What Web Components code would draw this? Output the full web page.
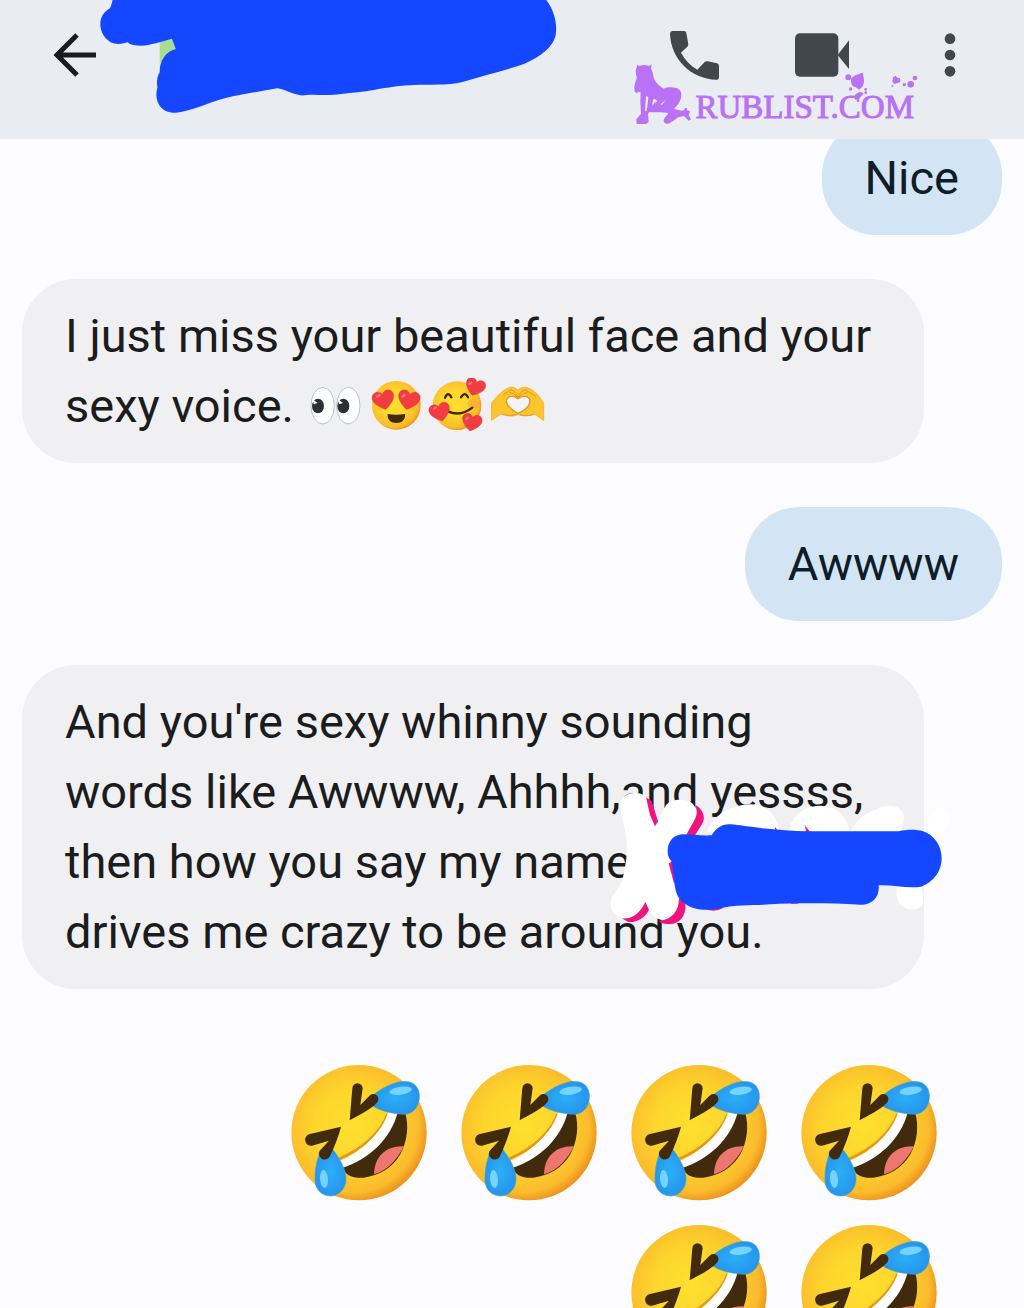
<!DOCTYPE html>
<html lang="en">
<head>
<meta charset="utf-8">
<meta name="viewport" content="width=device-width, initial-scale=1">
<title>Messages</title>
<style>
  html, body { margin: 0; height: 100%; }
  body { font-family: Roboto, "Liberation Sans", sans-serif; background: #fcfcff; color: #1a1c1e; overflow: hidden; }
</style>
</head>
<body>
<chat-screen>
  <chat-header slot="header"></chat-header>
  <chat-message type="sent">Nice</chat-message>
  <chat-message type="received">I just miss your beautiful face and your<br>sexy voice. <emoji-icon name="eyes"></emoji-icon><emoji-icon name="heart-eyes"></emoji-icon><emoji-icon name="hearts"></emoji-icon><emoji-icon name="heart-hands"></emoji-icon></chat-message>
  <chat-message type="sent">Awwww</chat-message>
  <chat-message type="received">And you're sexy whinny sounding<br>words like Awwww, Ahhhh,and yessss,<br>then how you say my name<br>drives me crazy to be around you.<name-cover slot="cover"></name-cover></chat-message>
  <emoji-message>
    <emoji-icon name="rofl"></emoji-icon>
    <emoji-icon name="rofl"></emoji-icon>
    <emoji-icon name="rofl"></emoji-icon>
    <emoji-icon name="rofl"></emoji-icon>
    <emoji-icon name="rofl"></emoji-icon>
    <emoji-icon name="rofl"></emoji-icon>
  </emoji-message>
</chat-screen>

<script>
// small helper: every component just clones its template
const define = (name, html, init) => {
    const template = document.createElement("template");
    template.innerHTML = html;

    customElements.define(name, class extends HTMLElement {
        constructor() {
            super();
            this.attachShadow({ mode: "open" });
            this.shadowRoot.appendChild(template.content.cloneNode(true));
        }

        connectedCallback() {
            if (init) init(this);
        }
    });
};

define("chat-screen", /*html*/`
  <style>
  :host { display: flex; flex-direction: column; height: 100vh; overflow: hidden; }
  .header { position: relative; z-index: 1; flex: none; }
  /* the list is scrolled a little under the header */
  main { display: flex; flex-direction: column; gap: 44px; padding: 0 22px; margin-top: -18px; }
  </style>
  <div class="header"><slot name="header"></slot></div>
  <main><slot></slot></main>
`);

define("chat-header", /*html*/`
  <style>
  :host { display: block; background: #e9edf1; }
  header { display: flex; align-items: center; height: 110px; padding: 0 49px 29px 53px; }
  button { display: flex; justify-content: center; border: 0; padding: 0; background: none; color: #42474e; cursor: pointer; }
  svg { display: block; }
  .back { color: #1a1c1e; }
  .name { align-self: flex-start; margin-left: 3px; }
  .actions { display: flex; align-items: center; gap: 76px; margin-left: auto; }
  .more { width: 50px; }
  site-logo { position: absolute; right: 108px; top: 62px; }
  </style>
  <header>
    <button class="back" aria-label="Back">
      <svg width="44" height="44" viewBox="0 0 44 44" fill="none" stroke="currentColor" stroke-width="5"><path d="M43 22H5M24 2L4 22L24 42"/></svg>
    </button>
    <svg class="name" width="457" height="114" viewBox="261 0 1194 342" preserveAspectRatio="none" role="img" aria-label="Hidden contact">
      <path fill="#a5de94" d="M417 110H450L462 150L417 190Z"/>
      <path fill="#1447ff" d="M294 0C291 12 290 19 287 25C268 38 261 55 262 77C264 105 282 131 308 132C320 132 328 129 333 127C340 135 352 137 368 137C392 136 423 124 449 116L459 147C432 154 416 185 417 216C409 232 409 248 411 262C406 282 408 300 415 314C426 333 442 339 460 338C502 334 544 307 587 295C637 280 682 275 724 265C744 268 763 282 784 286C797 287 803 284 816 284C856 287 881 284 913 279C973 274 1018 257 1080 255C1120 253 1168 257 1208 246C1258 228 1320 212 1370 191C1415 169 1444 140 1451 108C1457 71 1448 32 1427 0Z"/>
    </svg>
    <div class="actions">
      <button aria-label="Call">
        <svg width="49" height="49" viewBox="149 61 147 147"><path fill="currentColor" d="M156 61H191Q197 61 198 67L204 101Q204 105 201 108L182 126C194 148 210 165 231 177L253 154Q257 151 262 152L290 158Q296 160 296 166V201Q295 208 288 207C211 205 151 143 149 69Q149 62 156 61Z"/></svg>
      </button>
      <button aria-label="Video call">
        <svg width="54" height="44" viewBox="525 68 162 132"><g fill="currentColor"><rect x="525" y="69" width="130" height="130" rx="15"/><path d="M653 134L687 90V176Z"/></g></svg>
      </button>
      <button class="more" aria-label="More options">
        <svg width="12" height="44" viewBox="972 68 36 132"><g fill="currentColor"><circle cx="990" cy="85" r="16"/><circle cx="990" cy="134" r="16"/><circle cx="990" cy="183" r="16"/></g></svg>
      </button>
    </div>
  </header>
  <site-logo></site-logo>
`);

define("site-logo", /*html*/`
  <style>
  :host { display: block; color: #b971f5; }
  .logo { position: relative; padding: 26px 2px 0 62px; }
  span { display: block; font: 33px/38px "Liberation Serif", serif; -webkit-text-stroke: 1px; }
  svg { position: absolute; left: 0; top: 0; }
  </style>
  <div class="logo">
    <span>RUBLIST.COM</span>
    <svg width="284" height="64" viewBox="36 156 852 192" fill="currentColor" aria-hidden="true">
      <g transform="translate(28 150)">
        <path d="M18 14L24 18Q38 12 53 18L61 13L59 26C65 34 65 46 68 56C74 70 86 78 97 86C110 80 134 80 144 89C152 97 151 109 147 120C143 131 136 138 128 146L150 152L159 151L160 144L168 145L166 150L176 154L172 165L179 178L172 182L158 168L141 172C132 178 125 184 116 189C107 193 98 191 97 182C97 175 106 168 111 159L90 157L53 157L50 163L52 186L44 192H16L15 178L29 161L27 125L28 97L19 95V100L10 96L9 82C9 73 14 64 16 55C15 43 11 36 14 28Z"/>
        <path fill="#e9edf1" d="M44 108L51 112L48 140L45 153H41ZM78 124Q70 113 65 119Q63 130 63 138Q68 127 78 124ZM104 119L88 133L92 135Z"/>
      </g>
      <circle cx="679" cy="202" r="9"/>
      <path d="M687 207Q697 194 711 193Q716 187 723 189L726 211Q727 230 711 239Q704 231 692 228Q685 219 687 207Z"/>
      <circle cx="686" cy="237" r="5"/><circle cx="731" cy="238" r="4"/><circle cx="731" cy="248" r="4"/>
      <path d="M700 270Q693 254 706 250Q716 241 725 251Q715 260 713 265Q708 266 700 270Z"/>
      <path d="M813 202L821 197L826 203L834 205L835 216L825 220L817 222L811 215Z"/>
      <circle cx="811" cy="228" r="3"/><circle cx="847" cy="224" r="5"/><circle cx="866" cy="223" r="10"/><circle cx="879" cy="204" r="7"/>
    </svg>
  </div>
`);

define("chat-message", /*html*/`
  <style>
  :host { display: flex; }
  :host([type="sent"]) { justify-content: flex-end; }
  .bubble { position: relative; box-sizing: border-box; padding: 22px 43px; border-radius: 54px; font-size: 47px; line-height: 70px; white-space: nowrap; }
  :host([type="sent"]) .bubble { background: #d3e5f4; color: #0f1d28; }
  :host([type="received"]) .bubble { width: 92%; background: #f0f0f2; }
  </style>
  <div class="bubble"><slot></slot><slot name="cover"></slot></div>
`);

define("emoji-message", /*html*/`
  <style>
  :host { display: flex; justify-content: flex-end; padding: 31px 65px 0 0; --emoji-width: 136px; --emoji-height: 137px; --emoji-align: top; }
  .row { display: flex; flex-wrap: wrap; justify-content: flex-end; gap: 23px 34px; max-width: 646px; }
  </style>
  <div class="row"><slot></slot></div>
`);

// drawn over the name in the bubble
define("name-cover", /*html*/`
  <style>
  :host { position: absolute; left: 588px; top: 125px; }
  svg { display: block; }
  </style>
  <svg width="340" height="140" viewBox="60 60 1020 420" role="img" aria-label="Hidden name">
    <g fill="#fff">
      <path d="M92 105C90 78 116 67 140 69C158 69 170 80 174 98L195 165L225 112C234 91 260 87 287 91C313 95 324 119 315 145L294 193L250 210L238 285L252 340L268 390C267 426 250 446 215 449C190 445 177 430 168 396C155 425 134 444 109 444C75 444 60 421 62 395C65 370 91 356 99 322C104 294 111 268 111 230C110 182 92 143 92 105Z"/>
      <path d="M165 390L200 340L255 400L215 449Q180 440 165 390Z"/>
      <path d="M360 165C386 127 427 105 482 103C530 105 562 134 568 185H350Z"/>
      <path d="M596 185C604 135 643 107 693 107C741 109 770 135 778 185Z"/>
      <path d="M783 184C801 140 858 108 904 108C933 110 947 130 940 155L932 185Z"/>
      <path d="M920 350H995L1000 400C988 425 950 424 929 402C920 392 918 370 920 350Z"/>
      <path d="M1000 185L1026 129C1040 106 1076 111 1079 139C1079 165 1064 175 1052 190Z"/>
    </g>
    <g fill="#f0137f">
      <path d="M168 82L185 94L204 154L195 169L180 135Z"/>
      <path d="M315 104C340 117 349 145 335 164L312 200L288 196L308 160C318 142 326 130 315 104Z"/>
      <path d="M95 445C125 449 150 430 166 396L177 419C166 443 140 458 115 456Z"/>
      <path d="M205 452C242 452 267 425 267 384L286 402C289 440 267 462 239 462C225 462 213 460 205 452Z"/>
      <path d="M236 280L249 274L265 330L252 340Z"/>
      <path d="M555 171L568 187H555ZM645 166L661 187H648ZM340 414H400Q370 430 340 414ZM598 398H630Q612 405 598 398Z"/>
    </g>
    <path fill="#1447ff" d="M233 242C233 213 253 193 280 193C306 193 335 198 365 196C376 176 396 161 422 163C451 165 490 173 552 178C594 183 641 184 690 184L926 184C949 178 981 178 999 184C1031 194 1054 225 1055 263C1056 302 1030 337 993 350C954 357 910 344 866 346C869 382 847 405 811 404C717 399 617 399 542 403C491 407 438 403 396 414C350 424 310 420 286 402C258 386 254 356 252 322C246 301 251 287 242 270C235 263 233 253 233 242Z"/>
  </svg>
`);

const heart = (x, y, s, r) => `<path transform="translate(${x} ${y}) rotate(${r}) scale(${s})" fill="#f23c43" stroke="#c9352f" stroke-width="1" d="M0 27C-19 15-33 1-31-13C-29-29-8-32 0-17C8-32 29-29 31-13C33 1 19 15 0 27Z"/><ellipse cx="${x - 15 * s}" cy="${y - 13 * s}" rx="${7 * s}" ry="${4 * s}" transform="rotate(-35 ${x - 15 * s} ${y - 13 * s})" fill="#ff7774"/>`;

const faceGradient = `<radialGradient id="face" cx=".45" cy=".45" r=".56"><stop offset="0" stop-color="#fee02f"/><stop offset=".5" stop-color="#fdd52c"/><stop offset=".88" stop-color="#fabb2c"/><stop offset="1" stop-color="#ee951f"/></radialGradient>`;

const emojis = {
    "eyes": {
        label: "👀",
        box: "30 24 180 162",
        art: `<g fill="#fff" stroke="#b5c4ce" stroke-width="3"><ellipse cx="80" cy="107" rx="35" ry="55"/><ellipse cx="157" cy="107" rx="35" ry="55"/></g>
          <g fill="#2b3034"><ellipse cx="66" cy="108" rx="18" ry="22"/><ellipse cx="142" cy="108" rx="18" ry="22"/></g>
          <g fill="#fff"><path d="M50 88L65 99L53 103Z"/><path d="M126 88L141 99L129 103Z"/></g>`
    },
    "heart-eyes": {
        label: "😍",
        box: "210 24 180 162",
        art: `<circle cx="301" cy="106" r="73" fill="url(#face)"/>
          <path d="M275 132Q301 137 327 132C329 149 318 159 301 159S273 149 275 132Z" fill="#422b0d"/>` +
          heart(263, 91, 1.05, -13) + heart(338, 91, 1.05, 13)
    },
    "hearts": {
        label: "🥰",
        box: "390 24 180 162",
        art: `<circle cx="483" cy="107" r="73" fill="url(#face)"/>
          <ellipse cx="532" cy="101" rx="17" ry="14" fill="#f69b42" opacity=".5"/>
          <g fill="none" stroke="#422b0d" stroke-width="7" stroke-linecap="round"><path d="M447 83Q456 63 466 82M495 82Q507 63 516 82"/><path d="M456 124Q493 141 529 113"/></g>` +
          heart(537, 52, 0.95, 20) + heart(432, 127, 1, -15) + heart(527, 158, 0.95, 12)
    },
    "heart-hands": {
        label: "🫶",
        box: "570 24 180 162",
        art: `<path fill="#fbc52d" stroke="#e9a422" stroke-width="2" d="M586 151L587 99C602 79 619 61 638 53C650 48 659 54 666 61C674 50 690 49 703 57C721 67 736 84 743 101V152L716 132C700 139 681 140 666 133C652 142 632 138 616 132Z"/>
          <path fill="#f4f3f5" stroke="#e29622" stroke-width="4" d="M666 131C645 118 630 106 631 92C634 77 652 75 666 86C680 75 700 77 702 93C702 108 685 122 666 131Z"/>
          <path fill="none" stroke="#e49d22" stroke-width="3" d="M621 76L645 58Q657 61 666 82Q676 60 689 60L719 79M641 67Q654 68 666 84Q679 69 694 68M616 132Q640 141 660 134M671 134Q698 140 716 132"/>`
    },
    "rofl": {
        label: "🤣",
        box: "35 26 408 411",
        art: `<circle cx="239" cy="232" r="203" fill="url(#face)"/>
          <path d="M325 176C306 229 249 283 180 310" fill="none" stroke="#e89618" stroke-width="8"/>
          <path d="M350 170H377C390 213 383 259 363 297C338 339 299 361 253 367C222 369 199 362 188 334L280 285Z" fill="#422b0d"/>
          <path d="M284 357C285 304 320 270 374 273C354 311 327 345 284 357Z" fill="#ed7770"/>
          <path d="M327 170C308 232 249 286 182 317L191 337C268 313 335 251 355 171Z" fill="#fff"/>
          <path d="M275 124C314 91 361 72 390 80C414 86 424 109 419 136C414 161 397 176 375 177C338 175 303 168 276 149Z" fill="url(#tear)" stroke="#41a7b8" stroke-width="2"/>
          <ellipse cx="364" cy="106" rx="34" ry="12" transform="rotate(-8 364 106)" fill="#75d3ff"/>
          <path d="M155 276C180 306 201 343 200 373C198 402 179 421 153 422C126 421 107 401 107 374C106 344 112 317 122 290Z" fill="url(#tear)" stroke="#41a7b8" stroke-width="2"/>
          <ellipse cx="134" cy="371" rx="12" ry="27" transform="rotate(-5 134 371)" fill="#75d3ff"/>
          <g fill="#422b0d">
            <path d="M219 99A15 15 0 0 1 250 99L243 149L272 120A15 15 0 0 1 292 143C270 166 235 181 211 195Z"/>
            <path d="M185 214L92 236A17 17 0 0 0 98 271L149 256L121 286A15 15 0 0 0 151 304C165 276 178 241 185 214Z"/>
          </g>`
    }
};

define("emoji-icon", /*html*/`
  <style>
  :host { display: inline-block; vertical-align: var(--emoji-align, -10px); line-height: 0; }
  svg { display: block; width: var(--emoji-width, 60px); height: var(--emoji-height, 54px); }
  </style>
  <svg role="img"></svg>
`, (el) => {
    const emoji = emojis[el.getAttribute("name")];
    const svg = el.shadowRoot.querySelector("svg");
    svg.setAttribute("viewBox", emoji.box);
    svg.setAttribute("aria-label", emoji.label);
    svg.innerHTML = `<defs>${faceGradient}<radialGradient id="tear"><stop offset="0" stop-color="#2bb0f5"/><stop offset="1" stop-color="#2795ed"/></radialGradient></defs>${emoji.art}`;
});
</script>
</body>
</html>
